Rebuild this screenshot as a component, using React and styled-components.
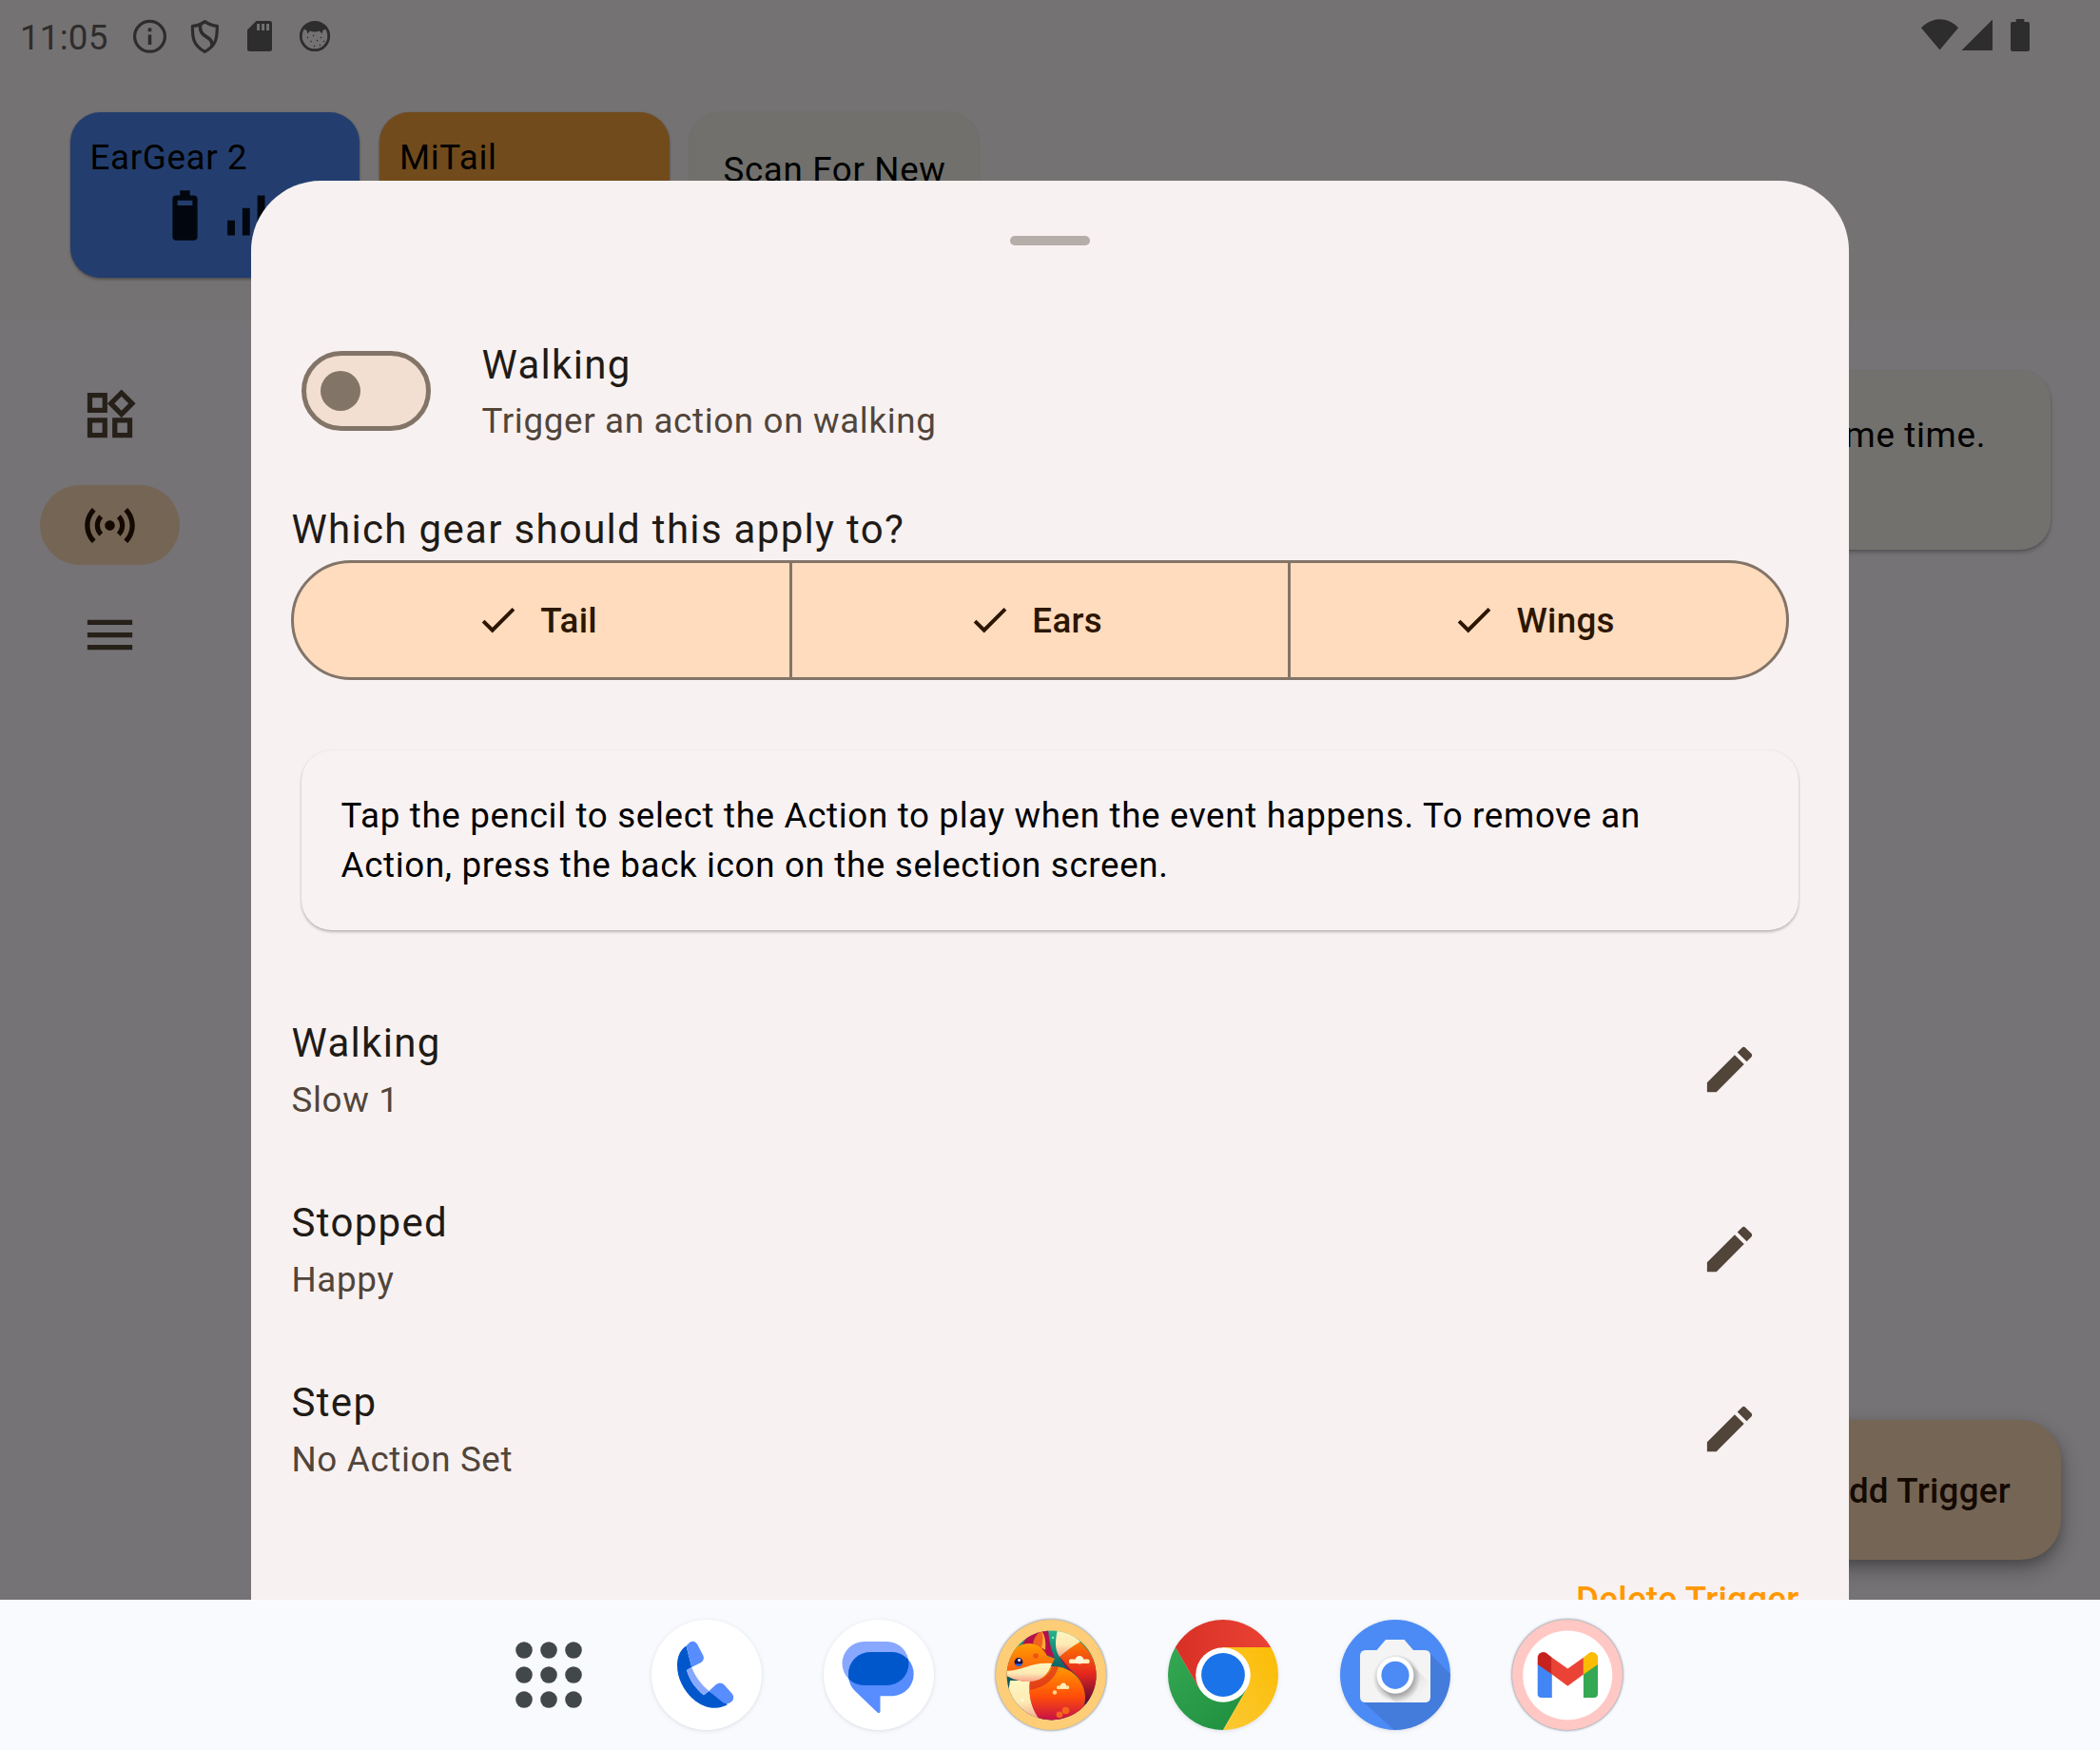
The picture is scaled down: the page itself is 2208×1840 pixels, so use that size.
import React from "react";
import styled, { createGlobalStyle } from "styled-components";

const GlobalStyle = createGlobalStyle`
  * { box-sizing: border-box; }
  html, body { margin: 0; padding: 0; }
  body { font-family: Roboto, "Noto Sans", sans-serif; overflow: hidden; }
  svg { display: block; flex: none; }
`;

const Device = styled.div`
  width: 2208px;
  height: 1840px;
  display: flex;
  flex-direction: column;
  overflow: hidden;
`;

const Screen = styled.div`
  position: relative;
  height: 1682px;
  flex: none;
  display: flex;
  flex-direction: column;
  overflow: hidden;
  background: #757376;
`;

/* ---------- Header ---------- */

const Header = styled.header`
  height: 338px;
  flex: none;
  background: #757273;
`;

const StatusBar = styled.div`
  height: 76px;
  padding: 0 74px 0 21px;
  display: flex;
  align-items: center;
  justify-content: space-between;
  color: #2d2d2d;
`;

const StatusGroup = styled.div`
  display: flex;
  align-items: center;
  padding-top: 4px;
`;

const Clock = styled.span`
  width: 109px;
  font-size: 36.75px;
  line-height: 44px;
  letter-spacing: 0.2px;
`;

const DeviceRow = styled.div`
  display: flex;
  gap: 21px;
  padding: 42px 0 0 73.5px;
`;

const DeviceCard = styled.div`
  width: 304.5px;
  height: 174px;
  border-radius: 31.5px;
  padding: 22px 21px;
  background: ${(p) => p.$color};
  box-shadow: 0 2px 3px rgba(0, 0, 0, 0.28), 0 0 2px rgba(0, 0, 0, 0.15);
  color: #000;
`;

const ScanCard = styled(DeviceCard)`
  padding: 35px 36px;
  box-shadow: 0 1px 3px rgba(0, 0, 0, 0.12);
`;

const DeviceName = styled.div`
  font-size: 36.75px;
  line-height: 52.5px;
  letter-spacing: 0.65px;
  white-space: nowrap;
`;

const DeviceIcons = styled.div`
  display: flex;
  padding: 2px 0 0 68px;
  color: #02070f;
`;

/* ---------- Page body ---------- */

const Body = styled.div`
  flex: 1;
  display: flex;
`;

const Rail = styled.nav`
  width: 231px;
  display: flex;
  flex-direction: column;
  align-items: center;
  gap: 31.5px;
  padding-top: 56.5px;
`;

const RailItem = styled.div`
  width: 147px;
  height: 84px;
  border-radius: 42px;
  display: flex;
  align-items: center;
  justify-content: center;
  background: ${(p) => (p.$selected ? "#756555" : "transparent")};
  color: ${(p) => (p.$selected ? "#140900" : "#262019")};
`;

const Content = styled.main`
  flex: 1;
  display: flex;
  flex-direction: column;
  justify-content: space-between;
  align-items: flex-end;
  padding: 51px 41.5px 42px 52px;
`;

const InfoPanel = styled.div`
  width: 1862px;
  height: 189px;
  margin-right: 10.5px;
  padding: 43px 68px 42px 42px;
  border-radius: 31.5px;
  background: #72716d;
  box-shadow: 0 3px 4px rgba(0, 0, 0, 0.22), 0 1px 2px rgba(0, 0, 0, 0.12);
  color: #000;
  font-size: 36.75px;
  line-height: 52.5px;
  letter-spacing: 0.656px;
  text-align: right;
`;

const Fab = styled.div`
  height: 147px;
  padding: 1px 52.5px 0 42px;
  display: flex;
  align-items: center;
  border-radius: 42px;
  background: #756555;
  color: #140900;
  font-size: 36.75px;
  font-weight: 500;
  letter-spacing: 0.26px;
  box-shadow: 0 10px 22px rgba(0, 0, 0, 0.3), 0 4px 10px rgba(0, 0, 0, 0.14);
`;

/* ---------- Bottom sheet ---------- */

const Sheet = styled.section`
  position: absolute;
  left: 264px;
  top: 190px;
  width: 1680px;
  height: 1640px;
  border-radius: 73.5px 73.5px 0 0;
  background: #f8f1f1;
  display: flex;
  flex-direction: column;
  padding: 57.75px 52.5px 0 42.5px;
  color: #1f1b16;
`;

const DragHandle = styled.div`
  width: 84px;
  height: 10.5px;
  margin: 0 0 58.25px 755.5px;
  flex: none;
  border-radius: 5.25px;
  background: #b4ada8;
`;

const Row = styled.div`
  height: 189px;
  flex: none;
  display: flex;
  align-items: center;
  justify-content: space-between;
  padding: 0 ${(p) => (p.$toggle ? "10px" : "42px")} 0 ${(p) => (p.$toggle ? "10px" : "0")};
  color: #51453a;
`;

const RowLead = styled.div`
  display: flex;
  align-items: center;
  gap: 53.5px;
`;

const RowText = styled.div`
  padding-bottom: 1px;
`;

const Title = styled.div`
  font-size: 42px;
  line-height: 63px;
  letter-spacing: 1.3125px;
  color: #1f1b16;
  white-space: nowrap;
`;

const Subtitle = styled.div`
  margin-top: 2.5px;
  font-size: 36.75px;
  line-height: 52.5px;
  letter-spacing: 0.656px;
  color: #51453a;
`;

const SwitchTrack = styled.div`
  width: 136.5px;
  height: 84px;
  border: 5.25px solid #837468;
  border-radius: 42px;
  background: #f2dfd1;
  display: flex;
  align-items: center;
  padding-left: 15.75px;
`;

const SwitchThumb = styled.div`
  width: 42px;
  height: 42px;
  border-radius: 50%;
  background: #837468;
`;

const GearHeading = styled(Title)`
  margin-top: 19.5px;
`;

const Segments = styled.div`
  margin: 1px 0 0 -1px;
  width: 1575px;
  height: 126px;
  flex: none;
  display: flex;
  overflow: hidden;
  border: 3px solid #837468;
  border-radius: 63px;
  background: #ffdcbe;
`;

const Segment = styled.div`
  flex: 1;
  display: flex;
  align-items: center;
  justify-content: center;
  gap: 21px;
  padding-right: 10px;
  color: #2c1600;
  font-size: 36.75px;
  font-weight: 500;
  letter-spacing: 0.26px;
  & + & { border-left: 3px solid #837468; }
`;

const HintCard = styled.div`
  margin: 73.5px 0 52.5px 10px;
  width: 1574.5px;
  height: 189px;
  flex: none;
  padding: 43px 42px 41px;
  border-radius: 31.5px;
  background: #f9f2f2;
  box-shadow: 0 2px 3px rgba(0, 0, 0, 0.24), 0 0 2px rgba(0, 0, 0, 0.08);
  color: #000;
  font-size: 36.75px;
  line-height: 52.5px;
  letter-spacing: 0.656px;
`;

const DeleteButton = styled.div`
  align-self: flex-end;
  margin-top: 58.5px;
  color: #ff9800;
  font-size: 36.75px;
  line-height: 52.5px;
  font-weight: 500;
  letter-spacing: 0.26px;
`;

/* ---------- Taskbar ---------- */

const Taskbar = styled.footer`
  flex: 1;
  display: flex;
  align-items: center;
  justify-content: center;
  gap: 61px;
  padding: 0 2px 1px 34px;
  background: #f8fafe;
`;

const AppIcon = styled.div`
  width: 120px;
  height: 120px;
  border-radius: 50%;
  filter: drop-shadow(0 ${(p) => (p.$strong ? "0 1.5px" : "1px 2px")} rgba(40, 50, 60, ${(p) => (p.$strong ? 0.75 : 0.14)}));
`;

const LauncherButton = styled.div`
  width: 89px;
  height: 89px;
  display: flex;
  align-items: center;
  justify-content: center;
`;

/* ---------- Icons ---------- */

const Icon = ({ d, size = 63 }) => (
  <svg width={size} height={size} viewBox="0 0 24 24" fill="currentColor">
    <path d={d} />
  </svg>
);

const paths = {
  battery: "M15.67 4H14V2h-4v2H8.33C7.6 4 7 4.6 7 5.33v15.33C7 21.4 7.6 22 8.33 22h7.33c.74 0 1.34-.6 1.34-1.33V5.33C17 4.6 16.4 4 15.67 4zM15 8H9V6h6z",
  signal: "M17 4h3v16h-3V4zM5 14h3v6H5v-6zm6-5h3v11h-3V9z",
  widgets: "M16.66 4.52l2.83 2.83-2.83 2.83-2.83-2.83 2.83-2.83M9 5v4H5V5h4m10 10v4h-4v-4h4M9 15v4H5v-4h4m7.66-13.31L11 7.34 16.66 13l5.66-5.66-5.66-5.65zM11 3H3v8h8V3zm10 10h-8v8h8v-8zm-10 0H3v8h8v-8z",
  sensors: "M7.76 16.24C6.67 15.16 6 13.66 6 12s.67-3.16 1.76-4.24l1.42 1.42C8.45 9.9 8 10.9 8 12c0 1.1.45 2.1 1.17 2.83l-1.41 1.41zm8.48 0C17.33 15.16 18 13.66 18 12s-.67-3.16-1.76-4.24l-1.42 1.42C15.55 9.9 16 10.9 16 12c0 1.1-.45 2.1-1.17 2.83l1.41 1.41zM12 10c-1.1 0-2 .9-2 2s.9 2 2 2 2-.9 2-2-.9-2-2-2zm8 2c0 2.21-.9 4.21-2.35 5.65l1.42 1.42C20.88 17.26 22 14.76 22 12s-1.12-5.26-2.93-7.07l-1.42 1.42C19.1 7.79 20 9.79 20 12zM6.35 6.35L4.93 4.93C3.12 6.74 2 9.24 2 12s1.12 5.26 2.93 7.07l1.42-1.42C4.9 16.21 4 14.21 4 12s.9-4.21 2.35-5.65z",
  menu: "M3 18h18v-2H3v2zm0-5h18v-2H3v2zm0-7v2h18V6H3z",
  check: "M9 16.17L4.83 12l-1.42 1.41L9 19 21 7l-1.41-1.41z",
  edit: "M3 17.25V21h3.75L17.81 9.94l-3.75-3.75L3 17.25zM20.71 7.04c.39-.39.39-1.02 0-1.41l-2.34-2.34c-.39-.39-1.02-.39-1.41 0l-1.83 1.83 3.75 3.75 1.83-1.83z",
};

const NotificationIcons = () => (
  <svg width="230" height="60" viewBox="0 0 230 60" fill="none" stroke="#2d2d2d">
    <circle cx="27.5" cy="28.3" r="15.9" strokeWidth="3.2" />
    <path d="M27.5 26.5V37" strokeWidth="3.6" />
    <path d="M27.5 19.4V23.2" strokeWidth="3.6" />
    <path d="M85.5 12.6C81 16 76.5 17.2 72.4 17.3C72.4 29 72.4 37 85.3 44.4C98.3 37 98.3 29 98.3 17.3C94 17 90 16 85.5 12.6Z" strokeWidth="3.2" strokeLinejoin="round" />
    <path d="M80.7 14.5C78.5 33 94.5 25 92.8 39.2" strokeWidth="3.6" />
    <path d="M139.5 12H153.5Q156 12 156 14.5V41.5Q156 44 153.5 44H132.5Q130 44 130 41.5V21.5Z" fill="#2d2d2d" stroke="none" />
    <path d="M141.6 15V22M146.6 15V22M151.6 15V22" stroke="#747171" strokeWidth="3" />
    <circle cx="201" cy="28" r="14.7" strokeWidth="2.8" />
    <path d="M188.5 20C191 15 196 13 201 13C206 13 211 15 213.5 20L209.500 22L208.500 25.500L206 22.500Q201 24.500 196 22.500L193.500 25.500L192.500 22Z" fill="#2d2d2d" stroke="none" />
    <path d="M193 29l1 1M199 27l1 1M207 29l1 1M196.500 33l1 1M203 32l1 1M210 33l1 1M200 38l1 1M206 37l1 1" strokeWidth="1.1" />
  </svg>
);

const SystemIcons = () => (
  <svg width="114" height="36" viewBox="0 0 114 36" fill="#2d2d2d">
    <path d="M0 9.2C11 -2.6 28 -2.6 39 9.2L19.500 32.600Z" />
    <path d="M75 .4V33H42.500Z" />
    <path d="M99.700 0H108.300V3H112Q114 3 114 5V32Q114 34 112 34H96Q94 34 94 32V5Q94 3 96 3H99.700Z" />
  </svg>
);

const Dots = () => (
  <svg width="70" height="70" viewBox="0 0 70 70" fill="#42484a">
    {[9, 35, 61].map((y) => [9, 35, 61].map((x) => <circle key={`${x}-${y}`} cx={x} cy={y} r="8.800" />))}
  </svg>
);

const IconSvg = ({ children }) => (
  <svg width="120" height="120" viewBox="0 0 120 120">{children}</svg>
);

const PhoneIcon = () => (
  <IconSvg>
    <circle cx="60" cy="60" r="58" fill="#fff" />
    <path d="M38.500 29.500C32 34 29 41 29 50C29 73 49 94.800 68 94.800C74 95 79 93 82 91L62.500 77L57 81.300C49 75 42 66 39 55L44.300 52Z" fill="#0057cc" />
    <path d="M39 55L44.300 52C48 62 55 71 62.500 77L57 81.300C49 75 42 66 39 55Z" fill="#88a8ff" />
    <path d="M38.500 29.500L42 26Q47 22.800 50 27.500L56 39Q58.500 43.500 54.500 46.800L44.300 52Z" fill="#588dff" />
    <path d="M62.500 77L70 70Q74 66.800 78 70L86.500 79.500Q90 84 86.500 88Q82 92 77 89Z" fill="#588dff" />
  </IconSvg>
);

const MessagesIcon = () => (
  <IconSvg>
    <circle cx="60" cy="60" r="58" fill="#fff" />
    <clipPath id="bubble"><rect x="21.500" y="25" width="70" height="46" rx="23" /></clipPath>
    <rect x="21.500" y="25" width="70" height="46" rx="23" fill="#88a8ff" />
    <path d="M51 36H75A23.200 23.200 0 0 1 75 82.300H61.500V98.500Q61 101 58.500 99.500L35 77C30 72 28 66 28 59A23 23 0 0 1 51 36Z" fill="#588dff" />
    <path clipPath="url(#bubble)" d="M51 36H75A23.200 23.200 0 0 1 75 82.300H61.500L35 77C30 72 28 66 28 59A23 23 0 0 1 51 36Z" fill="#0057cc" />
  </IconSvg>
);

const FoxIcon = () => (
  <IconSvg>
    <defs>
      <clipPath id="foxClip"><circle cx="60.600" cy="60.400" r="47" /></clipPath>
      <linearGradient id="sky" x1="0" y1="0" x2="0" y2="1">
        <stop offset="0" stopColor="#2fd09b" /><stop offset=".45" stopColor="#0b5f63" /><stop offset="1" stopColor="#083f50" />
      </linearGradient>
      <linearGradient id="head" x1="0" y1="0" x2="0" y2="1">
        <stop offset="0" stopColor="#ff9d00" /><stop offset="1" stopColor="#fb4a12" />
      </linearGradient>
      <linearGradient id="body" x1="0" y1="0" x2="0" y2="1">
        <stop offset="0" stopColor="#ff9a00" /><stop offset=".55" stopColor="#ff4d0a" /><stop offset="1" stopColor="#c40d4a" />
      </linearGradient>
      <linearGradient id="tail" x1="0" y1="0" x2="0" y2="1">
        <stop offset="0" stopColor="#ff7a00" /><stop offset=".5" stopColor="#e5261f" /><stop offset="1" stopColor="#4d0636" />
      </linearGradient>
      <linearGradient id="cream" x1="0" y1="0" x2="0" y2="1">
        <stop offset="0" stopColor="#fff6c0" /><stop offset=".55" stopColor="#fdeab4" /><stop offset="1" stopColor="#f7a48c" />
      </linearGradient>
    </defs>
    <circle cx="60" cy="60" r="58" fill="#fdcd78" />
    <g clipPath="url(#foxClip)">
      <rect width="120" height="120" fill="url(#sky)" />
      <path d="M30 28C34 20 40 15 46 12H57C58 22 59 32 64 42L45 36Z" fill="#b5104c" />
      <path d="M41 30C41 22 45 17 50 13C53 20 53 30 50 35Z" fill="#f2641c" />
      <path d="M50 14C54 18 55 27 54 34L50 31C52 25 52 19 50 14Z" fill="#ffae3c" />
      <path d="M69 41C74 36 82 30 90 25C102 35 110 50 108 65C106 78 100 86 96 93C98 74 90 62 80 54Z" fill="url(#tail)" />
      <path d="M67 12C76 12 84 18 91 25C82 30 75 36 69 41C63 32 65 22 67 12Z" fill="url(#cream)" />
      <path d="M69 41C74 54 92 62 96 93L88 100L88 64L80 54Z" fill="#a30e43" />
      <path d="M17 66H38C36 82 40 96 49 108L28 106L14 86Z" fill="url(#cream)" />
      <path d="M60 51C81 50 96 66 96 84C96 98 84 110 62 109L48 107C39 95 36 82 38 66C47 65 56 61 60 51Z" fill="url(#body)" />
      <path d="M38 67C49 67 59 60 61 51L68 51C65 64 54 73 38 76Z" fill="#d8301f" opacity=".7" />
      <path d="M13 45C17 31 30 26.500 38 27C47 27.500 53 34 56 40L64 43C62.500 46 61.500 48 60 50C57 61 48 67 37 67C28 67 18 64 12 60Z" fill="url(#head)" />
      <path d="M12 56C30 56 39 46 61 48C57 61 48 67 37 67C28 67 18 64 12 60Z" fill="url(#cream)" />
      <circle cx="44" cy="40" r="2.800" fill="#f05216" />
      <circle cx="26" cy="46.500" r="4.400" fill="#161150" />
      <path d="M22 48.500A4.400 4.400 0 0 0 30 48.500Z" fill="#2d6be8" />
      <circle cx="26.600" cy="44.600" r="1.500" fill="#fff" />
      <rect x="79" y="43.500" width="21.500" height="4.500" rx="1.500" fill="#ffefbd" />
      <circle cx="90" cy="44.200" r="4.200" fill="#fff6d8" />
      <rect x="66" y="71.300" width="13.200" height="3.600" rx="1.500" fill="#ffdf9c" />
      <circle cx="73" cy="71.500" r="3" fill="#ffefbd" />
      <circle cx="64" cy="78.500" r="2.200" fill="#ffd58c" />
      <circle cx="75.500" cy="97.500" r="3.800" fill="#f5641d" />
      <circle cx="69" cy="101.800" r="3.400" fill="#f5641d" />
      <circle cx="62" cy="21" r="1.200" fill="#8ff0c0" />
      <circle cx="30" cy="86.500" r="1.500" fill="#fffadf" />
    </g>
  </IconSvg>
);

const ChromeIcon = () => (
  <IconSvg>
    <defs>
      <linearGradient id="cr" x1="0" x2="1"><stop offset="0" stopColor="#d93025" /><stop offset="1" stopColor="#ea4335" /></linearGradient>
      <linearGradient id="cy" x1="1" y1="0" x2="0" y2="1"><stop offset="0" stopColor="#fbbc04" /><stop offset="1" stopColor="#fcc934" /></linearGradient>
      <linearGradient id="cg" x1="0" y1="0" x2="1" y2="1"><stop offset="0" stopColor="#34a853" /><stop offset="1" stopColor="#1e8e3e" /></linearGradient>
    </defs>
    <path d="M60 118A58 58 0 0 1 9.800 31L35 74.500L60 60L85 74.500Z" fill="url(#cg)" />
    <path d="M110.200 31A58 58 0 0 1 60 118L85 74.500L60 60V31Z" fill="url(#cy)" />
    <path d="M9.800 31A58 58 0 0 1 110.200 31H60V60L35 74.500Z" fill="url(#cr)" />
    <circle cx="60" cy="60" r="28.800" fill="#fff" />
    <circle cx="60" cy="60" r="22.900" fill="#1a73e8" />
  </IconSvg>
);

const CameraIcon = () => (
  <IconSvg>
    <defs>
      <clipPath id="camClip"><circle cx="60" cy="60" r="58" /></clipPath>
      <radialGradient id="lensShade" gradientUnits="userSpaceOnUse" cx="61.500" cy="63.500" r="25">
        <stop offset=".7" stopColor="#000" stopOpacity=".26" /><stop offset="1" stopColor="#000" stopOpacity="0" />
      </radialGradient>
      <linearGradient id="longShade" gradientUnits="userSpaceOnUse" x1="60" y1="60" x2="84" y2="84">
        <stop offset=".4" stopColor="#000" stopOpacity=".08" /><stop offset="1" stopColor="#000" stopOpacity="0" />
      </linearGradient>
    </defs>
    <circle cx="60" cy="60" r="58" fill="#4c8bf5" />
    <path clipPath="url(#camClip)" d="M95 36L125 66V125H66L25 87Z" fill="#000" opacity=".1" />
    <path d="M29 34H40.500L50 23H69.500L79 34H91Q97 34 97 40V83Q97 89 91 89H29Q23 89 23 83V40Q23 34 29 34Z" fill="#f4f4f4" />
    <path d="M74 46L97 69V83Q97 89 91 89H60L46 74Z" fill="url(#longShade)" />
    <circle cx="61.500" cy="63.500" r="25" fill="url(#lensShade)" />
    <circle cx="60" cy="60.300" r="19.400" fill="#fff" />
    <circle cx="60" cy="60.300" r="14.600" fill="#4c8bf5" />
  </IconSvg>
);

const GmailIcon = () => (
  <IconSvg>
    <circle cx="60" cy="60" r="58" fill="#ffc8c4" />
    <circle cx="60.200" cy="60.400" r="47" fill="#fff" />
    <path d="M28.700 48L43.800 59V84H33Q28.700 84 28.700 79.700Z" fill="#4285f4" />
    <path d="M92 48L76.900 59V84H87.700Q92 84 92 79.700Z" fill="#34a853" />
    <path d="M43.800 41.700L60.300 53.500L76.900 41.700V59.500L60.300 71.700L43.800 59.500Z" fill="#ea4335" />
    <path d="M28.700 49V42.500Q28.900 36 35.200 36Q37.700 36 40 38.700L43.800 41.700V59.500Z" fill="#c5221f" />
    <path d="M92 49V42.500Q91.800 36 85.500 36Q83 36 80.700 38.700L76.900 41.700V59.500Z" fill="#fbbc04" />
  </IconSvg>
);

/* ---------- Data ---------- */

const railItems = [
  { icon: "widgets" },
  { icon: "sensors", selected: true },
  { icon: "menu" },
];

const gear = ["Tail", "Ears", "Wings"];

const actions = [
  { title: "Walking", value: "Slow 1" },
  { title: "Stopped", value: "Happy" },
  { title: "Step", value: "No Action Set" },
];

const apps = [
  { name: "phone", Glyph: PhoneIcon },
  { name: "messages", Glyph: MessagesIcon },
  { name: "tail", Glyph: FoxIcon, strong: true },
  { name: "chrome", Glyph: ChromeIcon },
  { name: "camera", Glyph: CameraIcon },
  { name: "gmail", Glyph: GmailIcon, strong: true },
];

export default function App() {
  return (
    <Device>
      <GlobalStyle />
      <Screen>
        <Header>
          <StatusBar>
            <StatusGroup>
              <Clock>11:05</Clock>
              <NotificationIcons />
            </StatusGroup>
            <SystemIcons />
          </StatusBar>
          <DeviceRow>
            <DeviceCard $color="#233e6e">
              <DeviceName>EarGear 2</DeviceName>
              <DeviceIcons>
                <Icon d={paths.battery} />
                <Icon d={paths.signal} />
              </DeviceIcons>
            </DeviceCard>
            <DeviceCard $color="#724b1c">
              <DeviceName>MiTail</DeviceName>
            </DeviceCard>
            <ScanCard $color="#71706c">
              <DeviceName>Scan For New</DeviceName>
            </ScanCard>
          </DeviceRow>
        </Header>
        <Body>
          <Rail>
            {railItems.map((item) => (
              <RailItem key={item.icon} $selected={item.selected}>
                <Icon d={paths[item.icon]} />
              </RailItem>
            ))}
          </Rail>
          <Content>
            <InfoPanel>at the same time.</InfoPanel>
            <Fab>Add Trigger</Fab>
          </Content>
        </Body>

        <Sheet>
          <DragHandle />
          <Row $toggle>
            <RowLead>
              <SwitchTrack>
                <SwitchThumb />
              </SwitchTrack>
              <RowText>
                <Title>Walking</Title>
                <Subtitle>Trigger an action on walking</Subtitle>
              </RowText>
            </RowLead>
          </Row>
          <GearHeading>Which gear should this apply to?</GearHeading>
          <Segments>
            {gear.map((name) => (
              <Segment key={name}>
                <Icon d={paths.check} size={47.25} />
                {name}
              </Segment>
            ))}
          </Segments>
          <HintCard>
            Tap the pencil to select the Action to play when the event happens. To remove an
            Action, press the back icon on the selection screen.
          </HintCard>
          {actions.map((action) => (
            <Row key={action.title}>
              <RowText>
                <Title>{action.title}</Title>
                <Subtitle>{action.value}</Subtitle>
              </RowText>
              <Icon d={paths.edit} />
            </Row>
          ))}
          <DeleteButton>Delete Trigger</DeleteButton>
        </Sheet>
      </Screen>

      <Taskbar>
        <LauncherButton>
          <Dots />
        </LauncherButton>
        {apps.map(({ name, Glyph, strong }) => (
          <AppIcon key={name} $strong={strong}>
            <Glyph />
          </AppIcon>
        ))}
      </Taskbar>
    </Device>
  );
}
